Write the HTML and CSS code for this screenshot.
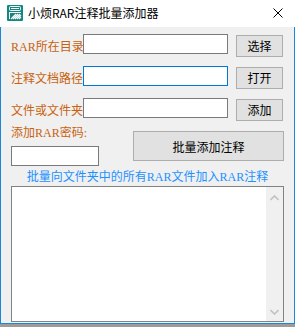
FILE: index.html
```html
<!DOCTYPE html>
<html lang="zh-CN">
<head>
  <meta charset="UTF-8">
  <title>小烦RAR注释批量添加器</title>
  <link rel="stylesheet" href="styles.css">
</head>
<body>

<div class="window">
  <div class="titlebar">
    <svg class="app-icon" width="16" height="16" viewBox="0 0 16 16">
      <rect width="16" height="16" rx="1" fill="#12887f"/>
      <rect x="2.5" y="1.5" width="11" height="4" rx="1" fill="none" stroke="#fff" stroke-width="1"/>
      <line x1="4" y1="3.5" x2="12" y2="3.5" stroke="#fff" stroke-width="1"/>
      <path d="M2 7h12v1H3v6H2z" fill="#fff"/>
      <path d="M4 14l5-5M6 14l5-5M8 14l5-5M10 14l4-4M12 14l2-2" stroke="#fff" stroke-width="1.1"/>
    </svg>
    <span class="title">小烦RAR注释批量添加器</span>
    <svg class="close" width="10" height="10" viewBox="0 0 10 10">
      <path d="M0.5 0.5l9 9M9.5 0.5l-9 9" stroke="#000" stroke-width="1"/>
    </svg>
  </div>

  <div class="client">
    <div class="row">
      <label class="lbl">RAR所在目录</label>
      <input class="field" type="text">
      <button class="btn">选择</button>
    </div>
    <div class="row">
      <label class="lbl">注释文档路径</label>
      <input class="field focused" type="text">
      <button class="btn">打开</button>
    </div>
    <div class="row">
      <label class="lbl">文件或文件夹</label>
      <input class="field" type="text">
      <button class="btn">添加</button>
    </div>

    <div class="pwd-row">
      <div class="pwd">
        <label class="lbl">添加RAR密码:</label>
        <input class="pwd-field" type="text">
      </div>
      <button class="big-btn">批量添加注释</button>
    </div>

    <div class="hint">批量向文件夹中的所有RAR文件加入RAR注释</div>

    <div class="memo">
      <div class="memo-text"></div>
      <div class="vscroll">
        <svg width="9" height="6" viewBox="0 0 9 6"><path d="M0.5 5L4.5 1l4 4" fill="none" stroke="#c2c2c2" stroke-width="1.6"/></svg>
        <svg width="9" height="6" viewBox="0 0 9 6"><path d="M0.5 1L4.5 5l4-4" fill="none" stroke="#c2c2c2" stroke-width="1.6"/></svg>
      </div>
    </div>
  </div>
</div>

</body>
</html>
```

FILE: styles.css
```css
* {
  box-sizing: border-box;
}

body {
  margin: 0;
  background: #9c9c9c;
  font-family: "Noto Sans CJK SC", sans-serif;
  font-size: 12px;
}

.window {
  width: 295px;
  height: 324px;
  display: flex;
  flex-direction: column;
  background: #f0f0f0;
}

.titlebar {
  height: 27px;
  background: #fff;
  display: flex;
  align-items: center;
  padding: 0 12px 0 7px;
  flex-shrink: 0;
}

.app-icon {
  margin-top: -1px;
}

.title {
  margin-left: 5px;
  font-size: 12px;
  line-height: 16px;
  color: #000;
  flex: 1;
  margin-top: -1px;
}

.close {
  margin-top: -1px;
}

.client {
  flex: 1;
  border: 1px solid #1c86d8;
  border-top: none;
  padding: 7px 10px 0 10px;
}

.row {
  display: flex;
  align-items: flex-start;
  height: 22px;
  margin-bottom: 10px;
}

.row:nth-child(3) {
  margin-bottom: 6px;
}

.lbl {
  display: block;
  width: 72px;
  color: #c8620f;
  font-family: "Liberation Serif", "Noto Sans CJK SC", serif;
  font-size: 12px;
  line-height: 14px;
  padding-top: 6px;
  white-space: nowrap;
}

.field {
  width: 145px;
  height: 20px;
  margin: 0;
  border: 1px solid #7a7a7a;
  background: #fff;
  outline: none;
}

.field.focused {
  border-color: #0078d7;
}

.btn {
  width: 47px;
  height: 22px;
  margin: 1px 0 0 8px;
  padding: 0;
  background: #e1e1e1;
  border: 1px solid #adadad;
  font-family: "Noto Sans CJK SC", sans-serif;
  font-size: 12px;
  line-height: 18px;
  color: #000;
}

.pwd-row {
  display: flex;
  align-items: flex-start;
  justify-content: space-between;
}

.pwd .lbl {
  width: auto;
  padding-top: 0;
}

.pwd-field {
  display: block;
  width: 88px;
  height: 20px;
  margin: 6px 0 0 0;
  border: 1px solid #7a7a7a;
  background: #fff;
  outline: none;
}

.big-btn {
  width: 151px;
  height: 30px;
  margin-top: 5px;
  padding: 0;
  background: #e1e1e1;
  border: 1px solid #adadad;
  font-family: "Noto Sans CJK SC", sans-serif;
  font-size: 12px;
  color: #000;
}

.hint {
  margin-top: 4px;
  text-align: center;
  color: #1e90ff;
  font-family: "Liberation Serif", "Noto Sans CJK SC", serif;
  font-size: 12px;
  line-height: 14px;
}

.memo {
  margin-top: 2px;
  height: 136px;
  border: 1px solid #828282;
  background: #fff;
  display: flex;
}

.memo-text {
  flex: 1;
}

.vscroll {
  width: 17px;
  background: #f0f0f0;
  display: flex;
  flex-direction: column;
  justify-content: space-between;
  align-items: center;
  padding: 8px 0 6px 0;
}
```
